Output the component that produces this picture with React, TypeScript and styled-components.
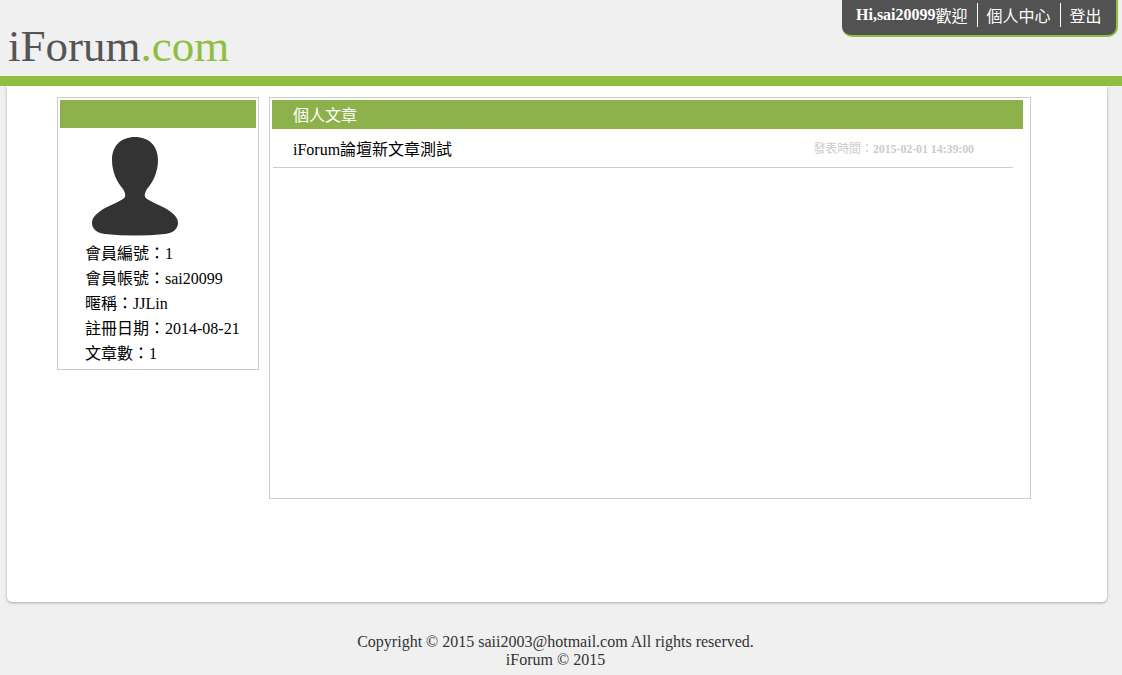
import React from "react";
import styled, { createGlobalStyle } from "styled-components";

const Global = createGlobalStyle`
  html, body { margin: 0; padding: 0; background: #f0f0f0; }
  body { font-family: "Liberation Serif", "Noto Sans CJK TC", serif; overflow: hidden; }
  * { box-sizing: border-box; }
`;

const Page = styled.div`
  width: 1122px;
  height: 675px;
  overflow: hidden;
  display: flex;
  flex-direction: column;
`;

const Header = styled.header`
  height: 86px;
  border-bottom: 10px solid #8fbe40;
  position: relative;
  padding: 20px 0 0 8px;
`;

const Logo = styled.div`
  font-size: 45px;
  line-height: 52px;
  color: #555;
`;

const LogoAccent = styled.span`
  color: #8fbe40;
`;

const UserMenu = styled.nav`
  position: absolute;
  top: 0;
  right: 4px;
  height: 37px;
  width: 276px;
  background: #525252;
  border-radius: 0 0 10px 10px;
  border-right: 2px solid #8fbe40;
  border-bottom: 2px solid #8fbe40;
  display: flex;
  align-items: flex-start;
  padding: 3px 0 0 14px;
  color: #fff;
  font-size: 16px;
`;

const MenuItem = styled.span<{ $divided?: boolean; $bold?: boolean }>`
  display: flex;
  align-items: center;
  height: 24px;
  padding: 0 9px;
  font-weight: ${(p) => (p.$bold ? 700 : 400)};
  border-left: ${(p) => (p.$divided ? "1px solid #fff" : "none")};
  &:first-child { padding-left: 0; }
`;

const Thin = styled.span`
  font-weight: 400;
`;

const Main = styled.main`
  margin: 0 15px 0 7px;
  height: 516px;
  background: #fff;
  border-radius: 0 0 5px 5px;
  box-shadow: 0 1px 3px rgba(0, 0, 0, 0.3);
  display: flex;
  align-items: flex-start;
  gap: 10px;
  padding: 11px 0 0 50px;
`;

const Profile = styled.aside`
  width: 202px;
  height: 273px;
  border: 1px solid #ccc;
  padding: 2px;
`;

const ProfileBar = styled.div`
  width: 196px;
  height: 28px;
  background: #8eb24b;
`;

const Avatar = styled.svg`
  display: block;
  width: 86px;
  height: 99px;
  margin: 9px 0 0 32px;
`;

const InfoList = styled.div`
  padding: 5px 0 0 25px;
`;

const InfoRow = styled.div`
  height: 25px;
  font-size: 16px;
  line-height: 25px;
  color: #000;
  white-space: nowrap;
`;

const Articles = styled.section`
  width: 762px;
  height: 402px;
  border: 1px solid #ccc;
  padding: 2px;
`;

const ArticlesBar = styled.div`
  width: 751px;
  height: 29px;
  background: #8eb24b;
  color: #fff;
  font-size: 16px;
  line-height: 31px;
  padding-left: 21px;
`;

const ArticleRow = styled.div`
  width: 740px;
  height: 39px;
  margin-left: 1px;
  border-bottom: 1px solid #ccc;
  display: flex;
  align-items: center;
  justify-content: space-between;
  padding: 0 39px 0 20px;
`;

const ArticleTitle = styled.span`
  font-size: 16px;
  color: #000;
`;

const ArticleTime = styled.span`
  font-size: 12px;
  font-weight: 700;
  color: #ccc;
  letter-spacing: -0.1px;
`;

const Footer = styled.footer`
  padding: 31px 11px 0 0;
  text-align: center;
  font-size: 16px;
  line-height: 18px;
  color: #333;
`;

export default function App() {
  return (
    <Page>
      <Global />
      <Header>
        <Logo>
          iForum<LogoAccent>.com</LogoAccent>
        </Logo>
        <UserMenu>
          <MenuItem $bold>
            Hi,sai20099<Thin>歡迎</Thin>
          </MenuItem>
          <MenuItem $divided>個人中心</MenuItem>
          <MenuItem $divided>登出</MenuItem>
        </UserMenu>
      </Header>
      <Main>
        <Profile>
          <ProfileBar />
          <Avatar viewBox="0 0 86 99">
            <path
              fill="#333"
              d="M43 0C29 0 20 9 20 23C20 35 25 45 31 52C34 57 34 60 31 62C23 67 13 70 7 75C2 79 0 82 0 86C0 92 5 96 13 97C33 99 53 99 73 97C81 96 86 92 86 86C86 82 84 79 79 75C73 70 63 67 55 62C52 60 52 57 55 52C61 45 66 35 66 23C66 9 57 0 43 0Z"
            />
          </Avatar>
          <InfoList>
            <InfoRow>會員編號：1</InfoRow>
            <InfoRow>會員帳號：sai20099</InfoRow>
            <InfoRow>暱稱：JJLin</InfoRow>
            <InfoRow>註冊日期：2014-08-21</InfoRow>
            <InfoRow>文章數：1</InfoRow>
          </InfoList>
        </Profile>
        <Articles>
          <ArticlesBar>個人文章</ArticlesBar>
          <ArticleRow>
            <ArticleTitle>iForum論壇新文章測試</ArticleTitle>
            <ArticleTime>
              <Thin>發表時間：</Thin>2015-02-01 14:39:00
            </ArticleTime>
          </ArticleRow>
        </Articles>
      </Main>
      <Footer>
        Copyright © 2015 saii2003@hotmail.com All rights reserved.
        <br />
        iForum © 2015
      </Footer>
    </Page>
  );
}
